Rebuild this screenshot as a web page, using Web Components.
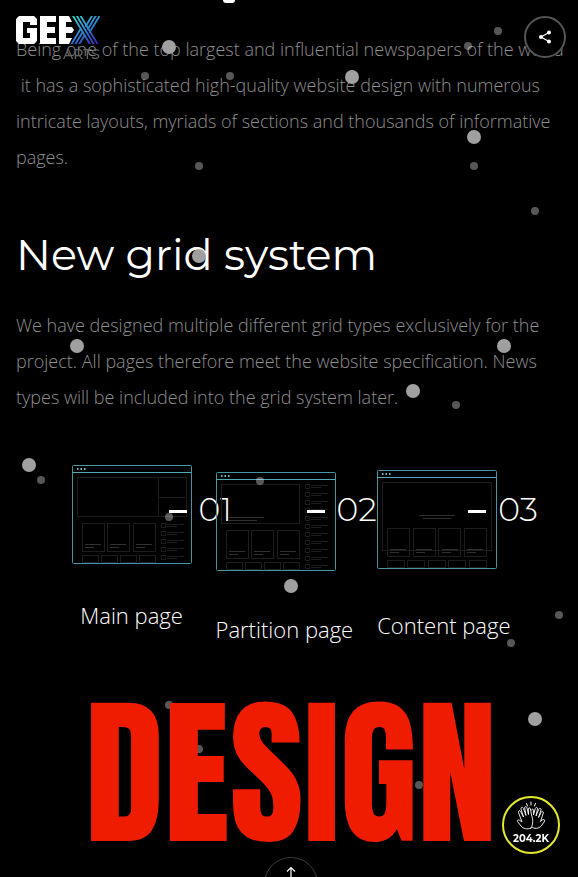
<!DOCTYPE html>
<html lang="en">
<head>
<meta charset="utf-8">
<meta name="viewport" content="width=device-width, initial-scale=1">
<title>Geex Arts</title>
<style>
  html, body { margin: 0; height: 100%; background: #000; }
  body { color: #fff; font-family: "Open Sans", "Noto Sans", sans-serif; overflow: hidden; }
</style>
</head>
<body>
<case-page></case-page>

<script>
const define = (name, html, setup) => {
  const template = document.createElement('template');
  template.innerHTML = html;
  customElements.define(name, class extends HTMLElement {
    connectedCallback() {
      if (this.shadowRoot) return;
      this.attachShadow({ mode: 'open' }).append(template.content.cloneNode(true));
      if (setup) setup(this, this.shadowRoot);
    }
  });
};

define('geex-logo', `
  <style>
    :host { display: block; }
    a { display: flex; flex-direction: column; width: 84px; color: #626262; text-decoration: none; }
    svg { display: block; width: 84px; height: 29px; }
    span { align-self: flex-end; font: 500 14px/18px Montserrat, Roboto, sans-serif; }
  </style>
  <a href="#" aria-label="Geex Arts">
    <svg viewBox="0 0 84 29" aria-hidden="true">
      <defs>
        <linearGradient id="g" gradientUnits="userSpaceOnUse" x1="60" y1="0" x2="80" y2="28">
          <stop offset="0" stop-color="#35cfca"/><stop offset=".5" stop-color="#2b86d8"/><stop offset="1" stop-color="#3c22b8"/>
        </linearGradient>
        <clipPath id="c"><path d="M55 0H85V28H55Z"/></clipPath>
      </defs>
      <g fill="#fff">
        <path d="M3 0H18L21 3V9H14V6H7V22H14V17H11V12H21V25L18 28H3L0 25V3Z"/>
        <path d="M24 0H40V6H31V11H39V17H31V22H40V28H24Z"/>
        <path d="M43 0H53L56 6H50V11H56L58 14L56 17H50V22H56L53 28H43Z"/>
      </g>
      <g clip-path="url(#c)" fill="none" stroke="url(#g)" stroke-width="1.8">
        <path d="M56.500 -1L74.500 29M60.300 -1L78.300 29M64.100 -1L82.100 29"/>
        <path d="M76.500 -1L69.500 10.700M80.300 -1L71.500 13.700M84.100 -1L73.300 16.800"/>
        <path d="M65 12.200L55 29M67 15.500L58.900 29M69 18.700L62.700 29"/>
      </g>
    </svg>
    <span>ARTS</span>
  </a>`);

define('share-button', `
  <style>
    :host { display: block; }
    button { display: grid; place-items: center; width: 42px; height: 42px; padding: 0; border: 2px solid #555; border-radius: 50%; background: #000; color: #fff; }
    svg { width: 14px; height: 14px; }
  </style>
  <button type="button" aria-label="Share">
    <svg viewBox="0 0 14 14"><path d="M11 2.5L3 7L11 11.5" fill="none" stroke="currentColor" stroke-width="1.2"/><g fill="currentColor"><circle cx="3" cy="7" r="2"/><circle cx="11" cy="2.5" r="2"/><circle cx="11" cy="11.5" r="2"/></g></svg>
  </button>`);

define('clap-button', `
  <style>
    :host { display: block; }
    button { box-sizing: border-box; display: flex; flex-direction: column; align-items: center; width: 58px; height: 58px; padding: 3px 0 0; border: 2px solid #e3e82c; border-radius: 50%; background: #000; color: #fff; font: 700 10px/13px Montserrat, Inter, sans-serif; }
    svg { width: 30px; height: 31px; }
  </style>
  <button type="button" aria-label="204.2K claps">
    <svg viewBox="0 0 30 31" fill="none" stroke="currentColor" stroke-linecap="round" stroke-linejoin="round">
      <path d="M15 1V4M10.500 2.500L11.500 5M19.500 2.500L18.500 5" stroke-width="1"/>
      <path d="M15 27C11 29 7 27.500 5 25L1.500 20.500C.8 19 2.800 18.400 4 19.500L6 21L2.500 11.500C2 9.500 4 9 4.700 10.700L7.500 16L5 8C4.600 6 6.800 5.600 7.400 7.400L10 14.500L8.700 7C8.500 5 10.600 5 11 7L12.500 13.500L12.300 8C12.500 6.400 14.200 6.600 14.400 8L15.500 14C17 18 17.500 23 15 27Z" stroke-width=".9"/>
      <path d="M16.500 26.500C20 28.500 24 27 26 24L28.700 20C29 18.500 27.300 18 26 19.200L24.500 20.500L27.300 12C27.700 10.200 25.800 9.600 25.200 11.300L22.500 16.500L25 9C25.500 7.200 23.400 6.600 22.700 8.400L20 15L21.500 8C21.700 6 19.600 6 19.200 7.700L17.500 14L17.400 9C17.200 7.600 15.800 7.800 15.700 9" stroke-width=".9"/>
    </svg>
    <span>204.2K</span>
  </button>`);

define('to-top', `
  <style>
    :host { display: block; height: 20px; overflow: hidden; }
    button { display: flex; justify-content: center; box-sizing: border-box; width: 54px; height: 54px; padding: 8px 0 0; border: 1px solid #3c3c3c; border-radius: 50%; background: none; color: #fff; }
    svg { width: 12px; height: 20px; }
  </style>
  <button type="button" aria-label="Back to top">
    <svg viewBox="0 0 12 20" fill="none" stroke="currentColor" stroke-width="1.200"><path d="M6 20V1.500M2 5.500L6 1.500L10 5.500"/></svg>
  </button>`);

define('text-block', `
  <style>
    :host { display: block; }
    p { margin: 0; color: #8f8f8f; font-weight: 300; font-size: 18px; line-height: 36px; }
  </style>
  <p><slot></slot></p>`);

define('section-title', `
  <style>
    :host { display: block; }
    h2 { margin: 0; font: 400 43px/60px Montserrat, Inter, sans-serif; }
  </style>
  <h2><slot></slot></h2>`);

define('word-banner', `
  <style>
    :host { display: block; text-align: center; }
    h2 { margin: 0; color: #f01c00; font: 400 160px/180px Anton, "Roboto Condensed", Impact, sans-serif; }
  </style>
  <h2><slot></slot></h2>`);

const rect = (x, y, w, h) => `<rect x="${x}.5" y="${y}.5" width="${w}" height="${h}"/>`;
const bar = (x, y, w) => `<path d="M${x} ${y}.5h${w}"/>`;
const listRows = (x, from, count) => Array.from({ length: count }, (_, i) => {
  const y = from + i * 8;
  return rect(x, y, 4, 4) + bar(x + 6, y + 1, 17) + bar(x + 6, y + 3, 10);
}).join('');
const tiles = (xs, y, w, h) => xs.map(x => rect(x, y, w, h)).join('');
const captions = (xs, y) => xs.map(x => bar(x, y, 16) + bar(x, y + 3, 9)).join('');
const wireframes = {
  main: rect(5, 12, 109, 39) + '<path d="M86.5 12v39M87 32.500h26"/>'
    + tiles([10, 35, 61], 58, 22, 28) + tiles([10, 29, 48, 67], 90, 16, 7) + listRows(89, 58, 5),
  partition: rect(5, 12, 78, 39) + tiles([10, 35, 61], 58, 22, 28)
    + tiles([10, 29, 48, 67], 90, 16, 7) + listRows(89, 12, 11),
  content: rect(5, 12, 109, 68) + tiles([10, 36, 61, 87], 58, 22, 28) + tiles([10, 30, 51, 71, 92], 90, 17, 7)
};
const highlights = {
  main: captions([13, 38, 64], 79),
  partition: bar(13, 45, 35) + bar(13, 48, 28) + captions([13, 38, 64], 79),
  content: bar(42, 45, 36) + bar(46, 48, 28) + captions([13, 39, 65, 90], 79)
};

define('grid-card', `
  <style>
    :host { display: block; }
    figure { position: relative; display: flex; flex-direction: column; margin: 0; }
    .art { display: block; width: 120px; height: 99px; margin-top: var(--drop, 0px); margin-bottom: calc(35px + var(--drop, 0px)); }
    .num { position: absolute; top: 24px; left: 0; display: flex; align-items: center; gap: 12px; padding-left: 91px; font: 300 33px/40px Montserrat, Inter, sans-serif; }
    :host([align="center"]) .num { padding-left: 97px; }
    .num::before { content: ""; width: 18px; height: 3px; margin-top: 5px; background: #fff; }
    figcaption { font-weight: 300; font-size: 22px; line-height: 32px; white-space: nowrap; }
    :host([align="center"]) figcaption { text-align: center; }
  </style>
  <figure>
    <svg class="art" viewBox="0 0 120 99" fill="none" aria-hidden="true">
      <g class="lines" stroke="#1d1d1c"></g>
      <g class="bars" stroke="#303030"></g>
      <rect x=".5" y=".5" width="119" height="98" rx="1" stroke="#4795a2"/>
      <path d="M0 7.500H120" stroke="#52a8b5"/>
      <path d="M5 4H14" stroke="#69bdc9" stroke-width="2" stroke-dasharray="1.500 2"/>
    </svg>
    <span class="num"></span>
    <figcaption><slot></slot></figcaption>
  </figure>`, (host, root) => {
  root.querySelector('.lines').innerHTML = wireframes[host.getAttribute('kind')];
  root.querySelector('.bars').innerHTML = highlights[host.getAttribute('kind')];
  root.querySelector('.num').textContent = host.getAttribute('number');
});

const large = [[169,47],[352,77],[474,137],[199,256],[77,346],[504,346],[413,391],[29,465],[291,586],[535,719]];
const small = [[498,31],[468,46],[145,76],[230,76],[199,166],[474,166],[535,211],[456,405],[41,480],[260,481],[169,517],[559,615],[511,643],[169,705],[199,749],[419,785]];
define('particle-field', `
  <style>
    :host { position: absolute; inset: 0; overflow: hidden; pointer-events: none; }
    svg { display: block; overflow: visible; width: 1px; height: 1px; }
  </style>
  <svg aria-hidden="true"><g class="l" fill="#a5a5a5" fill-opacity=".97"></g><g class="s" fill="#fff" fill-opacity=".34"></g></svg>`,
(host, root) => {
  const dots = (list, r) => list.map(([x, y]) => `<circle cx="${x}" cy="${y}" r="${r}"/>`).join('');
  root.querySelector('.l').innerHTML = dots(large, 7);
  root.querySelector('.s').innerHTML = dots(small, 4);
});

define('case-page', `
  <style>
    :host { position: relative; display: block; min-height: 100%; overflow: hidden; }
    main { display: flex; flex-direction: column; padding: 31px 12px 0 16px; }
    section-title { margin: 50px 0 22px; }
    .cards { display: flex; justify-content: center; align-items: flex-start; gap: 24px; margin-top: 50px; }
    .cards > :nth-child(2) { --drop: 7px; }
    .cards > :nth-child(3) { --drop: 5px; }
    word-banner { position: relative; z-index: 1; margin-top: 39px; }
    .descender { position: absolute; top: 0; left: 223px; width: 12px; height: 3px; border-radius: 0 0 6px 6px; background: #fff; }
    header { position: fixed; inset: 16px 12px auto 16px; z-index: 3; display: flex; justify-content: space-between; align-items: flex-start; }
    clap-button { position: fixed; right: 18px; bottom: 23px; z-index: 3; }
    footer { position: fixed; inset: auto 12px 0 16px; z-index: 3; display: flex; justify-content: center; }
  </style>
  <header><geex-logo></geex-logo><share-button></share-button></header>
  <span class="descender"></span>
  <main>
    <text-block>Being one of the top largest and influential newspapers of the world &nbsp;it has a sophisticated high-quality website design with numerous intricate layouts, myriads of sections and thousands of informative pages.</text-block>
    <section-title>New grid system</section-title>
    <text-block>We have designed multiple different grid types exclusively for the project. All pages therefore meet the website specification. News types will be included into the grid system later.</text-block>
    <div class="cards">
      <grid-card kind="main" number="01" align="center">Main page</grid-card>
      <grid-card kind="partition" number="02">Partition page</grid-card>
      <grid-card kind="content" number="03">Content page</grid-card>
    </div>
    <word-banner>DESIGN</word-banner>
  </main>
  <particle-field></particle-field>
  <footer><to-top></to-top></footer>
  <clap-button></clap-button>`);
</script>
</body>
</html>
